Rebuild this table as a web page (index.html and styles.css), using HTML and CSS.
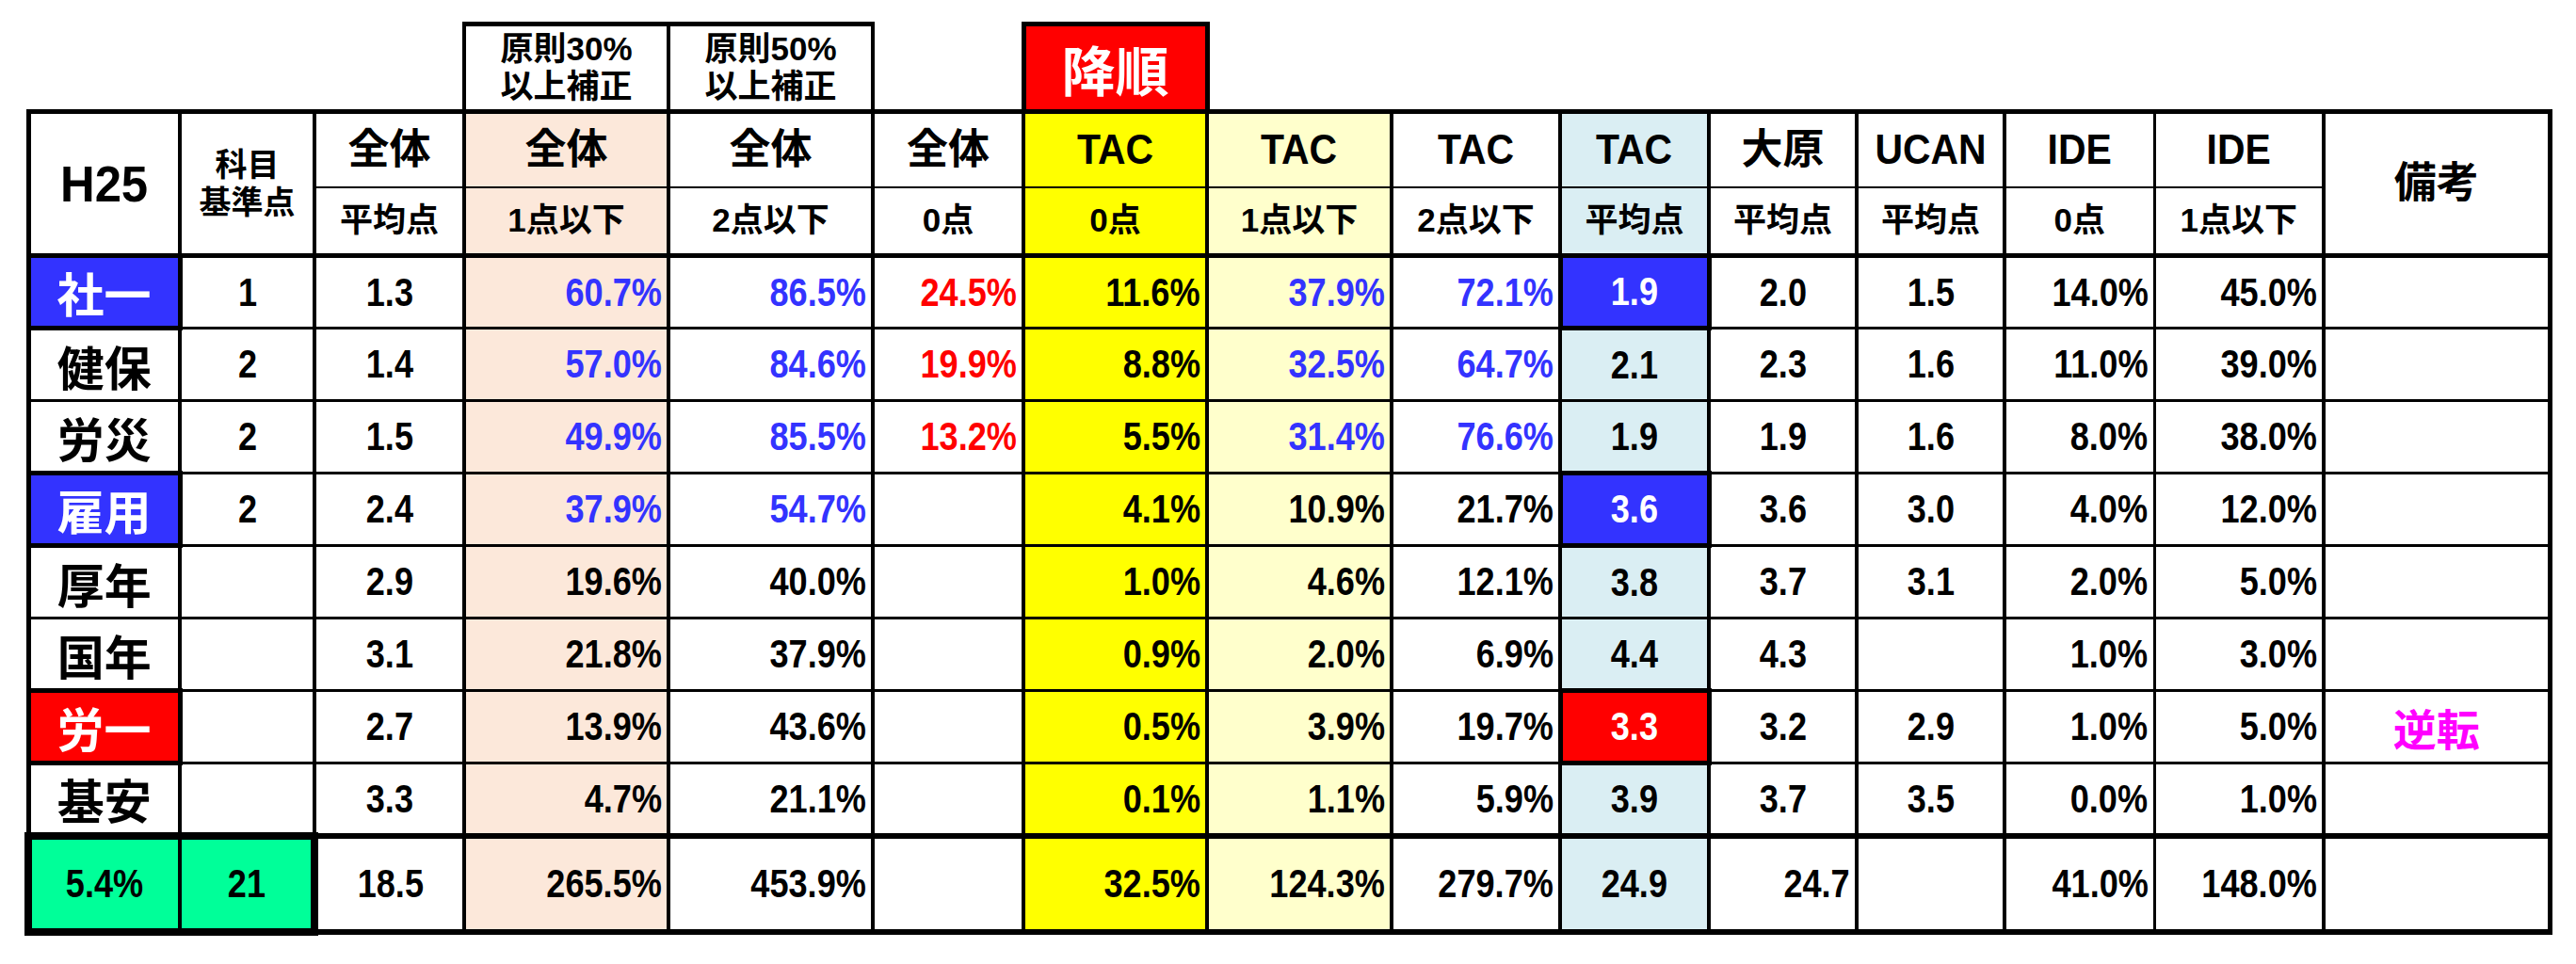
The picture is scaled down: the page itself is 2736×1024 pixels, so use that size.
FILE: index.html
```html
<!DOCTYPE html>
<html lang="ja">
<head>
<meta charset="utf-8">
<title>H25 科目別 得点分布</title>
<link rel="stylesheet" href="styles.css">
</head>
<body>
<div class="page">
<table class="sheet">
  <colgroup>
    <col class="w161"><col class="w143"><col class="w159"><col class="w217"><col class="w217">
    <col class="w160"><col class="w195"><col class="w196"><col class="w179"><col class="w158">
    <col class="w157"><col class="w157"><col class="w159"><col class="w180"><col class="w240">
  </colgroup>
  <tr class="r0">
    <td class="blank" colspan="3"></td>
    <td class="note">原則30%<br>以上補正</td>
    <td class="note">原則50%<br>以上補正</td>
    <td class="blank"></td>
    <td class="sort">降順</td>
    <td class="blank" colspan="8"></td>
  </tr>
  <tr class="h1">
    <td class="year first" rowspan="2"><span class="yr">H25</span></td>
    <td class="base" rowspan="2">科目<br>基準点</td>
    <td>全体</td>
    <td class="beige">全体</td>
    <td>全体</td>
    <td>全体</td>
    <td class="yel"><span class="hn">TAC</span></td>
    <td class="ltyel"><span class="hn">TAC</span></td>
    <td><span class="hn">TAC</span></td>
    <td class="ltblue"><span class="hn">TAC</span></td>
    <td>大原</td>
    <td><span class="hn">UCAN</span></td>
    <td class="ide0"><span class="hn">IDE</span></td>
    <td class="ide1"><span class="hn">IDE</span></td>
    <td class="memo last" rowspan="2">備考</td>
  </tr>
  <tr class="h2">
    <td>平均点</td>
    <td class="beige">1点以下</td>
    <td>2点以下</td>
    <td>0点</td>
    <td class="yel">0点</td>
    <td class="ltyel">1点以下</td>
    <td>2点以下</td>
    <td class="ltblue">平均点</td>
    <td>平均点</td>
    <td>平均点</td>
    <td class="ide0">0点</td>
    <td class="ide1">1点以下</td>
  </tr>
  <tr class="dr first-dr">
    <td class="lbl first hl bg-blue">社一</td>
    <td><span class="n">1</span></td>
    <td><span class="n">1.3</span></td>
    <td class="beige r t-blue"><span class="n">60.7%</span></td>
    <td class="r t-blue"><span class="n">86.5%</span></td>
    <td class="r t-red"><span class="n">24.5%</span></td>
    <td class="yel r"><span class="n">11.6%</span></td>
    <td class="ltyel r t-blue"><span class="n">37.9%</span></td>
    <td class="r t-blue"><span class="n">72.1%</span></td>
    <td class="hl bg-blue"><span class="n">1.9</span></td>
    <td><span class="n">2.0</span></td>
    <td><span class="n">1.5</span></td>
    <td class="ide0 r"><span class="n">14.0%</span></td>
    <td class="ide1 r"><span class="n">45.0%</span></td>
    <td class="last"></td>
  </tr>
  <tr class="dr">
    <td class="lbl first">健保</td>
    <td><span class="n">2</span></td>
    <td><span class="n">1.4</span></td>
    <td class="beige r t-blue"><span class="n">57.0%</span></td>
    <td class="r t-blue"><span class="n">84.6%</span></td>
    <td class="r t-red"><span class="n">19.9%</span></td>
    <td class="yel r"><span class="n">8.8%</span></td>
    <td class="ltyel r t-blue"><span class="n">32.5%</span></td>
    <td class="r t-blue"><span class="n">64.7%</span></td>
    <td class="ltblue"><span class="n">2.1</span></td>
    <td><span class="n">2.3</span></td>
    <td><span class="n">1.6</span></td>
    <td class="ide0 r"><span class="n">11.0%</span></td>
    <td class="ide1 r"><span class="n">39.0%</span></td>
    <td class="last"></td>
  </tr>
  <tr class="dr">
    <td class="lbl first">労災</td>
    <td><span class="n">2</span></td>
    <td><span class="n">1.5</span></td>
    <td class="beige r t-blue"><span class="n">49.9%</span></td>
    <td class="r t-blue"><span class="n">85.5%</span></td>
    <td class="r t-red"><span class="n">13.2%</span></td>
    <td class="yel r"><span class="n">5.5%</span></td>
    <td class="ltyel r t-blue"><span class="n">31.4%</span></td>
    <td class="r t-blue"><span class="n">76.6%</span></td>
    <td class="ltblue"><span class="n">1.9</span></td>
    <td><span class="n">1.9</span></td>
    <td><span class="n">1.6</span></td>
    <td class="ide0 r"><span class="n">8.0%</span></td>
    <td class="ide1 r"><span class="n">38.0%</span></td>
    <td class="last"></td>
  </tr>
  <tr class="dr">
    <td class="lbl first hl bg-blue">雇用</td>
    <td><span class="n">2</span></td>
    <td><span class="n">2.4</span></td>
    <td class="beige r t-blue"><span class="n">37.9%</span></td>
    <td class="r t-blue"><span class="n">54.7%</span></td>
    <td class="r"></td>
    <td class="yel r"><span class="n">4.1%</span></td>
    <td class="ltyel r"><span class="n">10.9%</span></td>
    <td class="r"><span class="n">21.7%</span></td>
    <td class="hl bg-blue"><span class="n">3.6</span></td>
    <td><span class="n">3.6</span></td>
    <td><span class="n">3.0</span></td>
    <td class="ide0 r"><span class="n">4.0%</span></td>
    <td class="ide1 r"><span class="n">12.0%</span></td>
    <td class="last"></td>
  </tr>
  <tr class="dr">
    <td class="lbl first">厚年</td>
    <td></td>
    <td><span class="n">2.9</span></td>
    <td class="beige r"><span class="n">19.6%</span></td>
    <td class="r"><span class="n">40.0%</span></td>
    <td class="r"></td>
    <td class="yel r"><span class="n">1.0%</span></td>
    <td class="ltyel r"><span class="n">4.6%</span></td>
    <td class="r"><span class="n">12.1%</span></td>
    <td class="ltblue"><span class="n">3.8</span></td>
    <td><span class="n">3.7</span></td>
    <td><span class="n">3.1</span></td>
    <td class="ide0 r"><span class="n">2.0%</span></td>
    <td class="ide1 r"><span class="n">5.0%</span></td>
    <td class="last"></td>
  </tr>
  <tr class="dr">
    <td class="lbl first">国年</td>
    <td></td>
    <td><span class="n">3.1</span></td>
    <td class="beige r"><span class="n">21.8%</span></td>
    <td class="r"><span class="n">37.9%</span></td>
    <td class="r"></td>
    <td class="yel r"><span class="n">0.9%</span></td>
    <td class="ltyel r"><span class="n">2.0%</span></td>
    <td class="r"><span class="n">6.9%</span></td>
    <td class="ltblue"><span class="n">4.4</span></td>
    <td><span class="n">4.3</span></td>
    <td></td>
    <td class="ide0 r"><span class="n">1.0%</span></td>
    <td class="ide1 r"><span class="n">3.0%</span></td>
    <td class="last"></td>
  </tr>
  <tr class="dr">
    <td class="lbl first hl bg-red">労一</td>
    <td></td>
    <td><span class="n">2.7</span></td>
    <td class="beige r"><span class="n">13.9%</span></td>
    <td class="r"><span class="n">43.6%</span></td>
    <td class="r"></td>
    <td class="yel r"><span class="n">0.5%</span></td>
    <td class="ltyel r"><span class="n">3.9%</span></td>
    <td class="r"><span class="n">19.7%</span></td>
    <td class="hl bg-red"><span class="n">3.3</span></td>
    <td><span class="n">3.2</span></td>
    <td><span class="n">2.9</span></td>
    <td class="ide0 r"><span class="n">1.0%</span></td>
    <td class="ide1 r"><span class="n">5.0%</span></td>
    <td class="last memo-note">逆転</td>
  </tr>
  <tr class="dr">
    <td class="lbl first">基安</td>
    <td></td>
    <td><span class="n">3.3</span></td>
    <td class="beige r"><span class="n">4.7%</span></td>
    <td class="r"><span class="n">21.1%</span></td>
    <td class="r"></td>
    <td class="yel r"><span class="n">0.1%</span></td>
    <td class="ltyel r"><span class="n">1.1%</span></td>
    <td class="r"><span class="n">5.9%</span></td>
    <td class="ltblue"><span class="n">3.9</span></td>
    <td><span class="n">3.7</span></td>
    <td><span class="n">3.5</span></td>
    <td class="ide0 r"><span class="n">0.0%</span></td>
    <td class="ide1 r"><span class="n">1.0%</span></td>
    <td class="last"></td>
  </tr>
  <tr class="tot">
    <td class="first green g1"><span class="n">5.4%</span></td>
    <td class="green g2"><span class="n">21</span></td>
    <td><span class="n">18.5</span></td>
    <td class="beige r"><span class="n">265.5%</span></td>
    <td class="r"><span class="n">453.9%</span></td>
    <td class="r"></td>
    <td class="yel r"><span class="n">32.5%</span></td>
    <td class="ltyel r"><span class="n">124.3%</span></td>
    <td class="r"><span class="n">279.7%</span></td>
    <td class="ltblue"><span class="n">24.9</span></td>
    <td class="r"><span class="n">24.7</span></td>
    <td></td>
    <td class="ide0 r"><span class="n">41.0%</span></td>
    <td class="ide1 r"><span class="n">148.0%</span></td>
    <td class="last"></td>
  </tr>
</table>
</div>
</body>
</html>
```

FILE: styles.css
```css
html, body {
  margin: 0;
  padding: 0;
  background: #ffffff;
}

body {
  font-family: "Liberation Sans", "Noto Sans CJK JP", sans-serif;
  color: #000000;
}

.page {
  padding: 23px 0 0 26px;
}

.sheet {
  border-collapse: collapse;
  table-layout: fixed;
  width: 2683px;
}

.w161 { width: 161px; }
.w143 { width: 143px; }
.w159 { width: 159px; }
.w217 { width: 217px; }
.w160 { width: 160px; }
.w195 { width: 195px; }
.w196 { width: 196px; }
.w179 { width: 179px; }
.w158 { width: 158px; }
.w157 { width: 157px; }
.w180 { width: 180px; }
.w240 { width: 240px; }

.sheet td {
  border-style: solid;
  border-color: #000000;
  border-width: 3px 4px;
  padding: 0 5px;
  text-align: center;
  vertical-align: middle;
  font-weight: bold;
  white-space: nowrap;
  overflow: hidden;
  line-height: 1.15;
}

/* condensed numerals (narrow bold face) */
.n {
  display: inline-block;
  transform: scaleX(0.84);
  transform-origin: center center;
}
.sheet .r .n {
  transform-origin: right center;
}
.hn {
  display: inline-block;
  transform: scaleX(0.93);
  transform-origin: center center;
}
.yr {
  display: inline-block;
  transform: scaleX(0.94);
  transform-origin: center center;
}

/* top floating header boxes */
.r0 { height: 93px; }
.r0 .blank {
  border-style: none;
}
.r0 .note {
  border-width: 5px 4px 5px 4px;
  font-family: "Liberation Sans", "Noto Sans CJK JP", sans-serif;
  font-size: 35px;
  line-height: 40px;
}
.r0 .sort {
  border-width: 5px;
  background: #ff0000;
  color: #ffffff;
  font-family: "Noto Sans CJK JP", sans-serif;
  font-size: 57px;
  line-height: 1;
}

/* header rows */
.h1 { height: 80px; }
.h1 td {
  border-top-width: 5px;
  border-bottom-width: 2px;
  font-size: 44px;
  font-family: "Liberation Sans", "Noto Sans CJK JP", sans-serif;
}
.h2 { height: 73px; }
.h2 td {
  border-top-width: 2px;
  border-bottom-width: 5px;
  font-size: 35px;
  font-family: "Liberation Sans", "Noto Sans CJK JP", sans-serif;
}
.h1 .year {
  font-size: 54px;
  border-bottom-width: 5px;
}
.h1 .base {
  font-size: 34px;
  line-height: 40px;
  border-bottom-width: 5px;
}
.h1 .memo {
  font-size: 45px;
  border-bottom-width: 5px;
}

/* data rows */
.dr { height: 77px; }
.first-dr td { border-top-width: 5px; }
.dr td, .tot td {
  font-family: "Liberation Sans", "Noto Sans CJK JP", sans-serif;
  font-size: 43px;
}
.dr .lbl {
  font-family: "Noto Sans CJK JP", sans-serif;
  font-size: 50px;
  line-height: 1;
}
.dr .memo-note {
  font-family: "Noto Sans CJK JP", sans-serif;
  font-size: 46px;
  color: #ff00ff;
  line-height: 1;
}

.tot { height: 102px; }
.tot td {
  border-top-width: 6px;
  border-bottom-width: 6px;
}

.sheet .first { border-left-width: 5px; }
.sheet .last { border-right-width: 5px; }
.sheet .ide0 { border-right-width: 3px; }
.sheet .ide1 { border-left-width: 3px; }

.sheet .r { text-align: right; }

/* fills */
.beige { background: #fce8da; }
.yel { background: #ffff00; }
.ltyel { background: #ffffcc; }
.ltblue { background: #daeef3; }

.sheet .hl { border-width: 5px; color: #ffffff; }
.bg-blue { background: #3333ff; }
.bg-red { background: #ff0000; }

.t-blue { color: #3333ff; }
.t-red { color: #ff0000; }

.sheet .green {
  background: #00ff99;
  border-top-width: 8px;
  border-bottom-width: 8px;
}
.sheet .g1 { border-left-width: 8px; }
.sheet .g2 { border-right-width: 8px; }
```
